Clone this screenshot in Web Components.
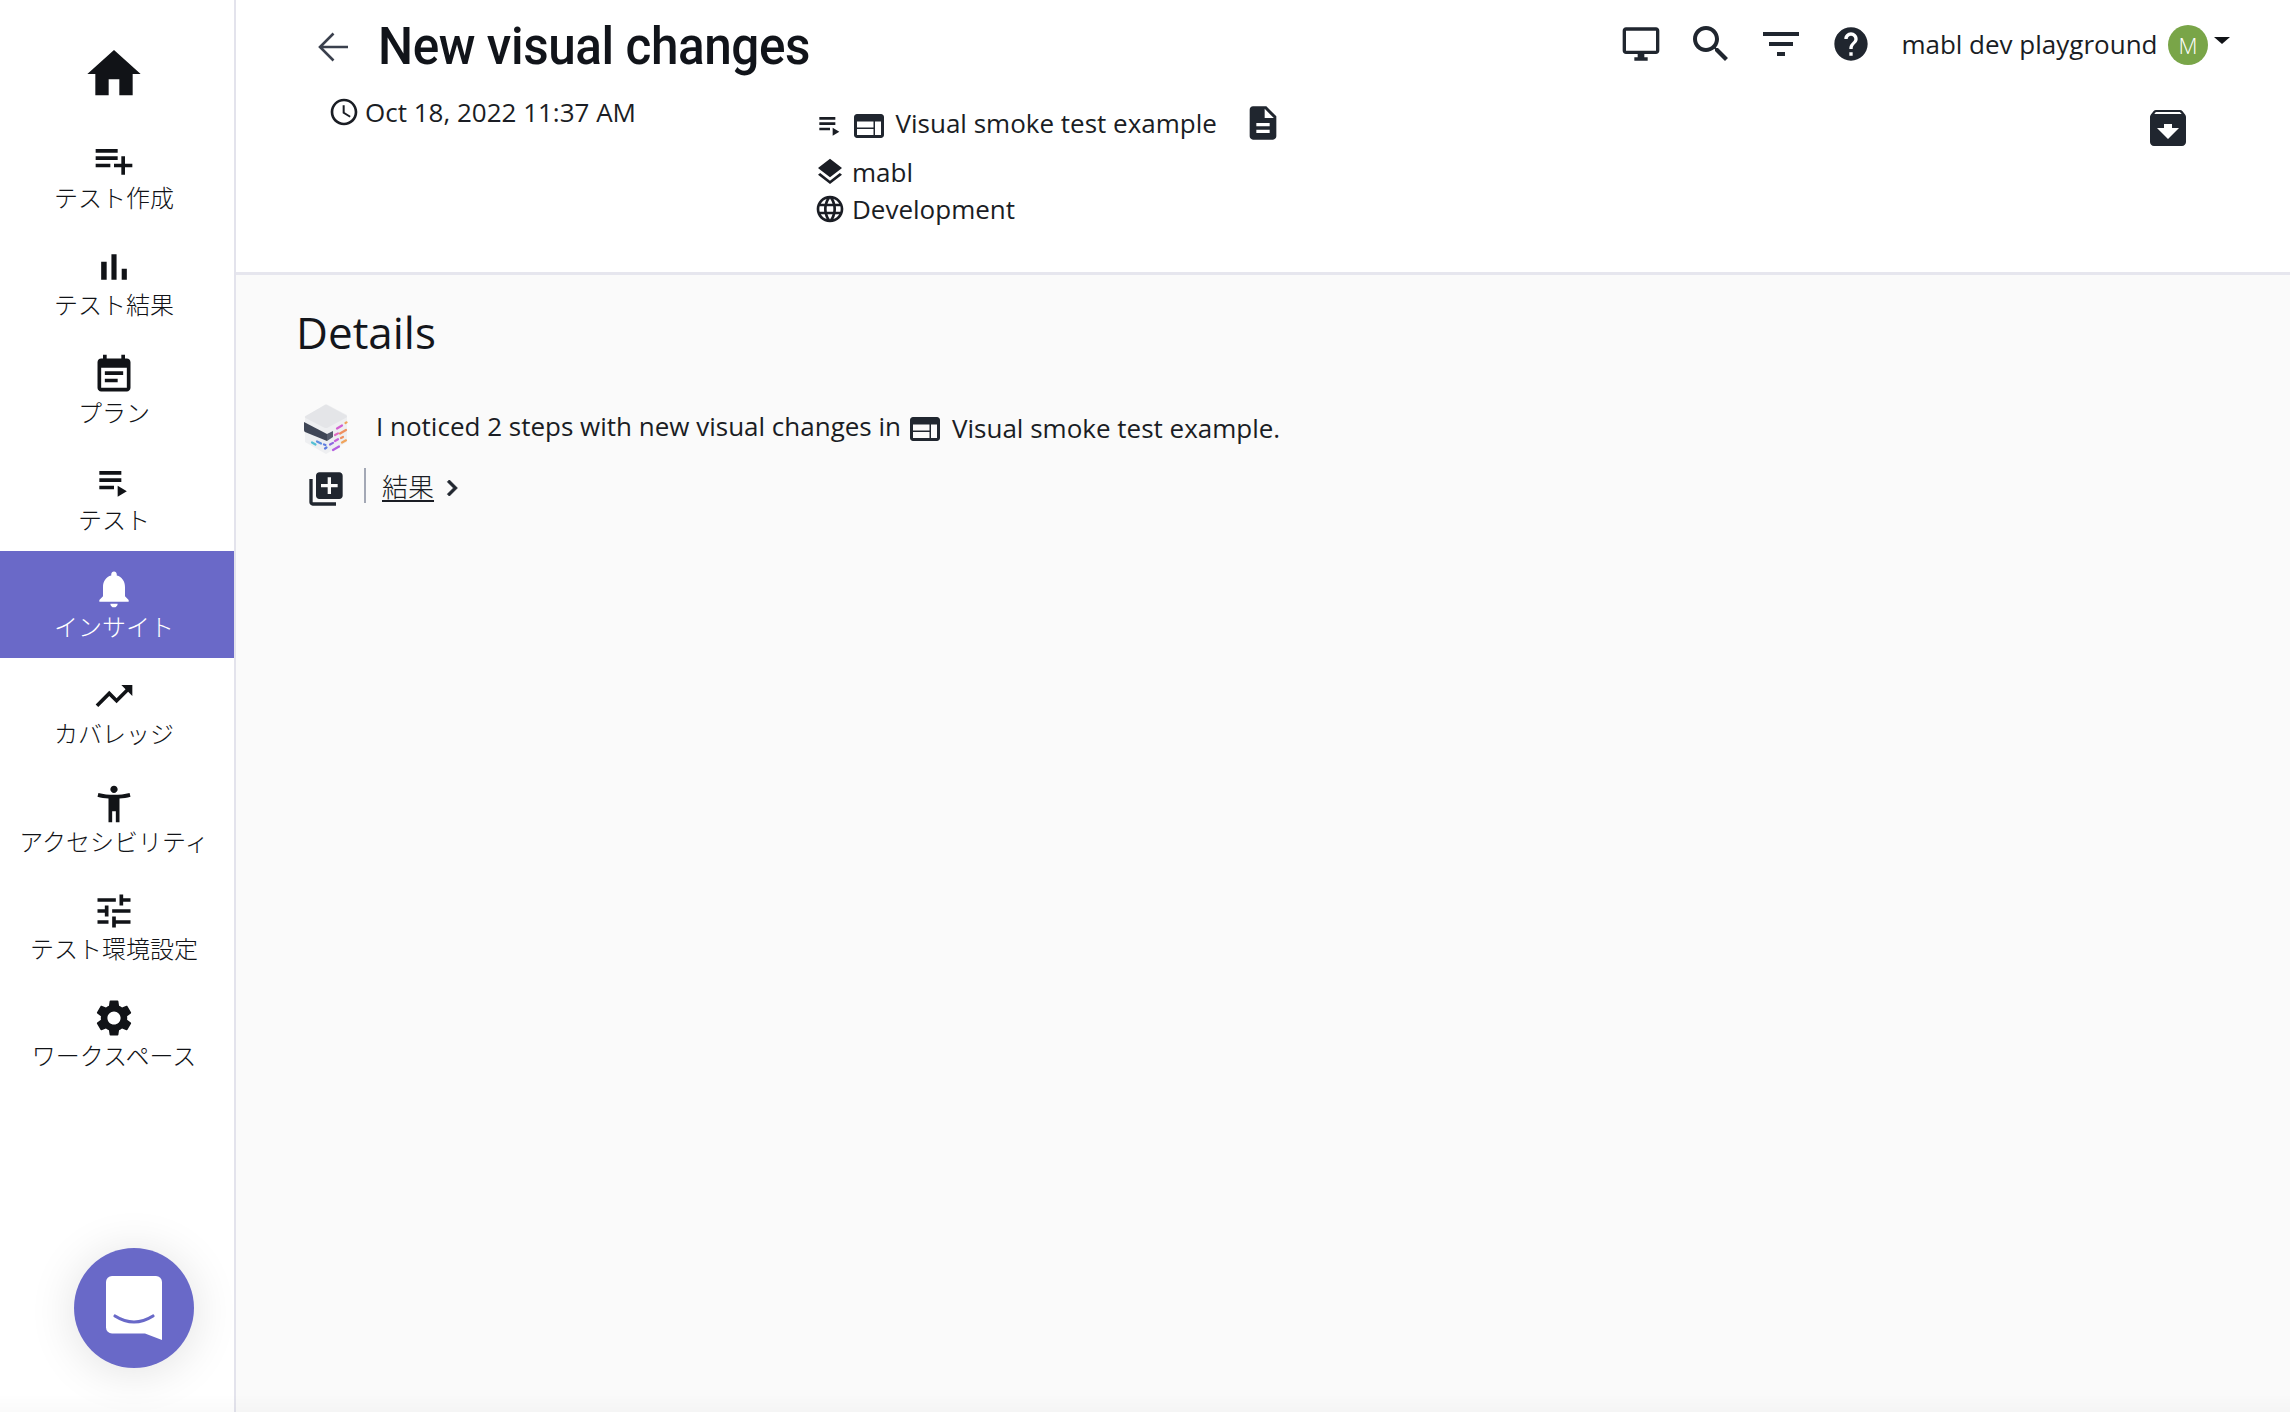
<!DOCTYPE html>
<html lang="ja">
<head>
<meta charset="utf-8">
<title>New visual changes</title>
<style>
  html, body { margin: 0; height: 100%; overflow: hidden; }
  body { font-family: "Open Sans", "Noto Sans CJK JP", sans-serif; color: #1a1d24; background: #fafafa; }
</style>
</head>
<body>
<mabl-app>
  <side-nav slot="nav">
    <nav-item icon="playlist_add">テスト作成</nav-item>
    <nav-item icon="bar_chart">テスト結果</nav-item>
    <nav-item icon="event_note">プラン</nav-item>
    <nav-item icon="playlist_play">テスト</nav-item>
    <nav-item icon="notifications" active>インサイト</nav-item>
    <nav-item icon="trending_up">カバレッジ</nav-item>
    <nav-item icon="accessibility">アクセシビリティ</nav-item>
    <nav-item icon="tune">テスト環境設定</nav-item>
    <nav-item icon="settings">ワークスペース</nav-item>
  </side-nav>
  <page-header slot="header" title-text="New visual changes"></page-header>
  <insight-details></insight-details>
  <chat-launcher slot="overlay"></chat-launcher>
</mabl-app>

<script>
const ICONS = {
  home: "M10 20v-6h4v6h5v-8h3L12 3 2 12h3v8z",
  playlist_add: "M14 10H2v2h12v-2zm0-4H2v2h12V6zm4 8v-4h-2v4h-4v2h4v4h2v-4h4v-2h-4zM2 16h8v-2H2v2z",
  bar_chart: "M5 9.2h3V19H5zM10.6 5h2.8v14h-2.8zm5.6 8H19v6h-2.8z",
  event_note: "M17 10H7v2h10v-2zm2-7h-1V1h-2v2H8V1H6v2H5c-1.11 0-1.99.9-1.99 2L3 19c0 1.1.89 2 2 2h14c1.1 0 2-.9 2-2V5c0-1.1-.9-2-2-2zm0 16H5V8h14v11zm-5-5H7v2h7v-2z",
  playlist_play: "M4 10h12v2H4zm0-4h12v2H4zm0 8h8v2H4zm10 0v6l5-3z",
  notifications: "M12 22c1.1 0 2-.9 2-2h-4c0 1.1.89 2 2 2zm6-6v-5c0-3.07-1.64-5.64-4.5-6.32V4c0-.83-.67-1.5-1.5-1.5s-1.5.67-1.5 1.5v.68C7.63 5.36 6 7.92 6 11v5l-2 2v1h16v-1l-2-2z",
  trending_up: "M16 6l2.29 2.29-4.88 4.88-4-4L2 16.59 3.41 18l6-6 4 4 6.3-6.29L22 12V6z",
  accessibility: "M20.5 6c-2.61.7-5.67 1-8.5 1s-5.89-.3-8.5-1L3 8c1.86.5 4 .83 6 1v13h2v-6h2v6h2V9c2-.17 4.14-.5 6-1l-.5-2zM12 6c1.1 0 2-.9 2-2s-.9-2-2-2-2 .9-2 2 .9 2 2 2z",
  tune: "M3 17v2h6v-2H3zM3 5v2h10V5H3zm10 16v-2h8v-2h-8v-2h-2v6h2zM7 9v2H3v2h4v2h2V9H7zm14 4v-2H11v2h10zm-6-4h2V7h4V5h-4V3h-2v6z",
  settings: "M19.14 12.94c.04-.3.06-.61.06-.94 0-.32-.02-.64-.07-.94l2.03-1.58c.18-.14.23-.41.12-.61l-1.92-3.32c-.12-.22-.37-.29-.59-.22l-2.39.96c-.5-.38-1.03-.7-1.62-.94l-.36-2.54c-.04-.24-.24-.41-.48-.41h-3.84c-.24 0-.43.17-.47.41l-.36 2.54c-.59.24-1.13.57-1.62.94l-2.39-.96c-.22-.08-.47 0-.59.22L2.74 8.87c-.12.21-.08.47.12.61l2.03 1.58c-.05.3-.09.63-.09.94s.02.64.07.94l-2.03 1.58c-.18.14-.23.41-.12.61l1.92 3.32c.12.22.37.29.59.22l2.39-.96c.5.38 1.03.7 1.62.94l.36 2.54c.05.24.24.41.48.41h3.84c.24 0 .44-.17.47-.41l.36-2.54c.59-.24 1.13-.56 1.62-.94l2.39.96c.22.08.47 0 .59-.22l1.92-3.32c.12-.22.07-.47-.12-.61l-2.01-1.58zM12 15.6c-1.98 0-3.6-1.62-3.6-3.6s1.62-3.6 3.6-3.6 3.6 1.62 3.6 3.6-1.62 3.6-3.6 3.6z",
  access_time: "M11.99 2C6.47 2 2 6.48 2 12s4.47 10 9.99 10C17.52 22 22 17.52 22 12S17.52 2 11.99 2zM12 20c-4.42 0-8-3.58-8-8s3.58-8 8-8 8 3.58 8 8-3.58 8-8 8zm.5-13H11v6l5.25 3.15.75-1.23-4.5-2.67z",
  web: "M20 4H4c-1.1 0-1.99.9-1.99 2L2 18c0 1.1.9 2 2 2h16c1.1 0 2-.9 2-2V6c0-1.1-.9-2-2-2zm-5 14H4v-4h11v4zm0-5H4V9h11v4zm5 5h-4V9h4v9z",
  description: "M14 2H6c-1.1 0-1.99.9-1.99 2L4 20c0 1.1.89 2 1.99 2H18c1.1 0 2-.9 2-2V8l-6-6zm2 16H8v-2h8v2zm0-4H8v-2h8v2zm-3-5V3.5L18.5 9H13z",
  layers: "M11.99 18.54l-7.37-5.73L3 14.07l9 7 9-7-1.63-1.27-7.38 5.74zM12 16l7.36-5.73L21 9l-9-7-9 7 1.63 1.27L12 16z",
  language: "M11.99 2C6.47 2 2 6.48 2 12s4.47 10 9.99 10C17.52 22 22 17.52 22 12S17.52 2 11.99 2zm6.93 6h-2.95c-.32-1.25-.78-2.45-1.38-3.56 1.84.63 3.37 1.91 4.33 3.56zM12 4.04c.83 1.2 1.48 2.53 1.91 3.96h-3.82c.43-1.43 1.08-2.76 1.91-3.96zM4.26 14C4.1 13.36 4 12.69 4 12s.1-1.36.26-2h3.38c-.08.66-.14 1.32-.14 2 0 .68.06 1.34.14 2H4.26zm.82 2h2.95c.32 1.25.78 2.45 1.38 3.56-1.84-.63-3.37-1.9-4.33-3.56zm2.95-8H5.08c.96-1.66 2.49-2.93 4.33-3.56C8.81 5.55 8.35 6.75 8.03 8zM12 19.96c-.83-1.2-1.48-2.53-1.91-3.96h3.82c-.43 1.43-1.08 2.76-1.91 3.96zM14.34 14H9.66c-.09-.66-.16-1.32-.16-2 0-.68.07-1.35.16-2h4.68c.09.65.16 1.32.16 2 0 .68-.07 1.34-.16 2zm.25 5.56c.6-1.11 1.06-2.31 1.38-3.56h2.95c-.96 1.65-2.49 2.93-4.33 3.56zM16.36 14c.08-.66.14-1.32.14-2 0-.68-.06-1.34-.14-2h3.38c.16.64.26 1.31.26 2s-.1 1.36-.26 2h-3.38z",
  desktop: "M21 2H3c-1.1 0-2 .9-2 2v12c0 1.1.9 2 2 2h7v2H8v2h8v-2h-2v-2h7c1.1 0 2-.9 2-2V4c0-1.1-.9-2-2-2zm0 14H3V4h18v12z",
  search: "M15.5 14h-.79l-.28-.27C15.41 12.59 16 11.11 16 9.5 16 5.91 13.09 3 9.5 3S3 5.91 3 9.5 5.91 16 9.5 16c1.61 0 3.09-.59 4.23-1.57l.27.28v.79l5 4.99L20.49 19l-4.99-5zm-6 0C7.01 14 5 11.99 5 9.5S7.01 5 9.5 5 14 7.01 14 9.5 11.99 14 9.5 14z",
  filter: "M10 18h4v-2h-4v2zM3 6v2h18V6H3zm3 7h12v-2H6v2z",
  help: "M12 2C6.48 2 2 6.48 2 12s4.48 10 10 10 10-4.48 10-10S17.52 2 12 2zm1 17h-2v-2h2v2zm2.07-7.75l-.9.92C13.45 12.9 13 13.5 13 15h-2v-.5c0-1.1.45-2.1 1.17-2.83l1.24-1.26c.37-.36.59-.86.59-1.41 0-1.1-.9-2-2-2s-2 .9-2 2H8c0-2.21 1.79-4 4-4s4 1.79 4 4c0 .88-.36 1.68-.93 2.25z",
  archive: "M20.54 5.23l-1.39-1.68C18.88 3.21 18.47 3 18 3H6c-.47 0-.88.21-1.16.55L3.46 5.23C3.17 5.57 3 6.02 3 6.5V19c0 1.1.9 2 2 2h14c1.1 0 2-.9 2-2V6.5c0-.48-.17-.93-.46-1.27zM12 17.5L6.5 12H10v-2h4v2h3.5L12 17.5zM5.12 5l.81-1h12l.94 1H5.12z",
  library_add: "M4 6H2v14c0 1.1.9 2 2 2h14v-2H4V6zm16-4H8c-1.1 0-2 .9-2 2v12c0 1.1.9 2 2 2h12c1.1 0 2-.9 2-2V4c0-1.1-.9-2-2-2zm-1 9h-4v4h-2v-4H9V9h4V5h2v4h4v2z",
  chevron: "M10 6L8.59 7.41 13.17 12l-4.58 4.59L10 18l6-6z"
};

class UiIcon extends HTMLElement {
  constructor() {
    super();
    this.attachShadow({ mode: "open" });
  }

  connectedCallback() {
    const size = this.getAttribute("size") || 24;
    const path = ICONS[this.getAttribute("name")] || "";
    this.shadowRoot.innerHTML = `
      <style>
        :host { display: block; flex: none; width: ${size}px; height: ${size}px; color: inherit; }
        svg { display: block; width: 100%; height: 100%; fill: currentColor; }
      </style>
      <svg viewBox="0 0 24 24" aria-hidden="true"><path d="${path}"/></svg>`;
  }
}
customElements.define("ui-icon", UiIcon);

class MablApp extends HTMLElement {
  constructor() {
    super();
    this.attachShadow({ mode: "open" });
    this.shadowRoot.innerHTML = `
      <style>
        :host { display: flex; position: relative; width: 100%; height: 100vh; background: #fafafa; }
        :host::after {
          content: ""; position: absolute; left: 0; right: 0; bottom: 0; height: 18px; pointer-events: none;
          background: linear-gradient(to bottom, rgba(0, 0, 0, 0), rgba(0, 0, 0, .02));
        }
        .main { flex: 1; min-width: 0; display: flex; flex-direction: column; }
      </style>
      <slot name="nav"></slot>
      <div class="main">
        <slot name="header"></slot>
        <slot></slot>
      </div>
      <slot name="overlay"></slot>`;
  }
}
customElements.define("mabl-app", MablApp);

class SideNav extends HTMLElement {
  constructor() {
    super();
    this.attachShadow({ mode: "open" });
    this.shadowRoot.innerHTML = `
      <style>
        :host {
          display: block; flex: none; box-sizing: border-box; width: 236px; height: 100%;
          background: #fff; border-right: 2px solid #e3e3ec;
        }
        .home {
          height: 122px; display: flex; justify-content: center; padding: 42px 6px 0 0;
          box-sizing: border-box; color: #111317;
        }
      </style>
      <div class="home"><ui-icon name="home" size="64"></ui-icon></div>
      <slot></slot>`;
  }
}
customElements.define("side-nav", SideNav);

class NavItem extends HTMLElement {
  constructor() {
    super();
    this.attachShadow({ mode: "open" });
  }

  connectedCallback() {
    this.shadowRoot.innerHTML = `
      <style>
        :host {
          display: flex; flex-direction: column; align-items: center; box-sizing: border-box;
          height: 107.3px; padding: 16px 6px 0 0; color: #111317;
        }
        :host([active]) { background: #6a69c8; color: #fff; }
        .label {
          font-family: "Noto Sans CJK JP", sans-serif; font-size: 24px; line-height: 29px;
          font-weight: 300; white-space: nowrap;
        }
      </style>
      <ui-icon name="${this.getAttribute("icon")}" size="44"></ui-icon>
      <div class="label"><slot></slot></div>`;
  }
}
customElements.define("nav-item", NavItem);

class PageHeader extends HTMLElement {
  constructor() {
    super();
    this.attachShadow({ mode: "open" });
  }

  static get styles() {
    return `
      :host {
        display: block; flex: none; box-sizing: border-box; height: 275px;
        padding: 0 60px 0 78px; background: #fff; border-bottom: 3px solid #e6e6ee;
        font-size: 26px;
      }
      .top { display: flex; align-items: center; height: 88px; margin-bottom: 8px; }
      .back { flex: none; width: 40px; height: 40px; margin: 6px 24px 0 0; }
      .back path { fill: none; stroke: #3a404d; stroke-width: 2.6; }
      h1 {
        margin: 6px 0 0; font-family: "Roboto", sans-serif; letter-spacing: -.45px;
        font-size: 51px; font-weight: 500; line-height: 60px; color: #11141a; white-space: nowrap;
        transform: scaleX(.97); transform-origin: left center;
      }
      .tools { margin-left: auto; display: flex; align-items: center; color: #20262f; }
      .cell { width: 70px; display: flex; justify-content: center; }
      .account { margin-left: 15.5px; color: #1a1d24; white-space: nowrap; }
      .avatar {
        width: 40px; height: 40px; margin: 2px 6px 0 10.5px; border-radius: 50%; background: #79a548; color: #fff;
        display: flex; align-items: center; justify-content: center; font-size: 22px; font-weight: 300;
      }
      .caret {
        align-self: flex-start; margin-top: 17px; width: 0; height: 0;
        border: 8px solid transparent; border-top: 7px solid #111317; border-bottom: 0;
      }
      .meta { display: flex; align-items: flex-start; }
      .date { width: 486px; margin-left: 14px; display: flex; align-items: center; height: 32px; gap: 5px; flex: none; }
      .info { display: flex; flex-direction: column; margin-left: 0; color: #1a1d24; }
      .line { display: flex; align-items: center; height: 36px; gap: 6px; }
      .line + .line + .line { margin-top: 1px; }
      .line.first { height: 48px; margin: 3px 0 7px; gap: 7px; }
      .line.first .web { color: #20262f; margin: 6px 1.5px 0 -1px; }
      .line.first .plist { margin-right: -1px; margin-top: 3px; }
      .line.first .doc { color: #20262f; margin-left: 19px; }
      .archive { margin: 8px 38px 0 auto; color: #20262f; }
    `;
  }

  connectedCallback() {
    this.shadowRoot.innerHTML = `
      <style>${PageHeader.styles}</style>
      <div class="top">
        <svg class="back" viewBox="0 0 40 40"><path d="M34 20H7.5M19.5 6.5 6 20l13.5 13.5"/></svg>
        <h1>${this.getAttribute("title-text")}</h1>
        <div class="tools">
          <div class="cell"><ui-icon name="desktop" size="40"></ui-icon></div>
          <div class="cell"><ui-icon name="search" size="48"></ui-icon></div>
          <div class="cell"><ui-icon name="filter" size="48"></ui-icon></div>
          <div class="cell"><ui-icon name="help" size="40"></ui-icon></div>
          <span class="account">mabl dev playground</span>
          <span class="avatar">M</span>
          <span class="caret"></span>
        </div>
      </div>
      <div class="meta">
        <div class="date"><ui-icon name="access_time" size="32"></ui-icon><span>Oct 18, 2022 11:37 AM</span></div>
        <div class="info">
          <div class="line first">
            <ui-icon class="plist" name="playlist_play" size="32"></ui-icon>
            <ui-icon class="web" name="web" size="36"></ui-icon>
            <span>Visual smoke test example</span>
            <ui-icon class="doc" name="description" size="40"></ui-icon>
          </div>
          <div class="line"><ui-icon name="layers" size="32"></ui-icon><span>mabl</span></div>
          <div class="line"><ui-icon name="language" size="32"></ui-icon><span>Development</span></div>
        </div>
        <ui-icon class="archive" name="archive" size="48"></ui-icon>
      </div>`;
  }
}
customElements.define("page-header", PageHeader);

class InsightCube extends HTMLElement {
  constructor() {
    super();
    this.attachShadow({ mode: "open" });
    this.shadowRoot.innerHTML = `
      <style>
        :host { display: block; flex: none; width: 44px; height: 50px; }
        svg { display: block; width: 100%; height: 100%; }
      </style>
      <svg viewBox="0 0 44 50">
        <path d="M22 0 43 11 v27 L22 50 1 38 V13z" fill="#eeeff1"/>
        <path d="M20.5 1.2Q22 .4 23.5 1.2L42 11.2Q44 12.5 42 13.8L24 23.5Q22 24.5 20 23.5L1.5 14Q0 13 1.5 12z" fill="#e4e5e8"/>
        <path d="M0 18 23 30V37L1 28q-1-.5-1-2z" fill="#3f4656"/>
        <path d="M23 30l6-3v6l-6 4z" fill="#565d6d"/>
        <g stroke-width="2.2" stroke-linecap="round" fill="none">
          <path d="M33 24.500l5-3" stroke="#d25fd0"/><path d="M41.500 19l1-.6" stroke="#f0a45c"/>
          <path d="M36 29.500l6-3.500" stroke="#ef8f5f"/><path d="M31 31l3-1.600" stroke="#e26ac0"/>
          <path d="M37 34l2-1" stroke="#ef8f5f"/><path d="M31 37l3-1.800" stroke="#c662dc"/>
          <path d="M38 38.500l4-2.200" stroke="#f0a45c"/><path d="M26 40.500l3-1.600" stroke="#8f67e0"/>
          <path d="M29 46l6-3.500" stroke="#b45fe0"/><path d="M13 37.500l4 2" stroke="#5f8fe0"/>
          <path d="M8 38.500l3.500 2" stroke="#54c0d4"/><path d="M21 44.500l1.500-1" stroke="#5f7de0"/>
          <path d="M20 40.500l1.500.5" stroke="#5f7de0"/>
        </g>
      </svg>`;
  }
}
customElements.define("insight-cube", InsightCube);

class InsightDetails extends HTMLElement {
  constructor() {
    super();
    this.attachShadow({ mode: "open" });
    this.shadowRoot.innerHTML = `
      <style>
        :host { display: block; flex: 1; background: #fafafa; padding: 27px 0 0 60px; font-size: 26px; color: #1a1d24; }
        h2 { margin: 0 0 42px; font-size: 44px; font-weight: 400; line-height: 60px; color: #14161b; }
        .message { display: flex; align-items: flex-start; height: 64px; margin-left: 8px; white-space: nowrap; }
        .message insight-cube { margin-right: 28px; }
        .text { line-height: 36px; margin-top: 4px; }
        .web { color: #20262f; margin: 7px 9px 0 6px; }
        .text.after { margin-top: 6px; }
        .result { display: flex; align-items: flex-start; margin-left: 10px; }
        .add { color: #20262f; margin-top: 1px; }
        .sep { width: 2px; height: 35px; background: #a3a8b5; margin: 0 16px 0 18px; }
        a {
          font-family: "Noto Sans CJK JP", sans-serif; font-size: 26px; font-weight: 300; line-height: 36px; color: #1a1d24;
          text-decoration: underline; text-underline-offset: 3px; margin-top: 0;
        }
        .chev { color: #20262f; stroke: #20262f; stroke-width: .7; margin: 4px 0 0 2px; }
      </style>
      <h2>Details</h2>
      <div class="message">
        <insight-cube></insight-cube>
        <span class="text">I noticed 2 steps with new visual changes in</span>
        <ui-icon class="web" name="web" size="36"></ui-icon>
        <span class="text after">Visual smoke test example.</span>
      </div>
      <div class="result">
        <ui-icon class="add" name="library_add" size="40"></ui-icon>
        <span class="sep"></span>
        <a>結果</a>
        <ui-icon class="chev" name="chevron" size="32"></ui-icon>
      </div>`;
  }
}
customElements.define("insight-details", InsightDetails);

class ChatLauncher extends HTMLElement {
  constructor() {
    super();
    this.attachShadow({ mode: "open" });
    this.shadowRoot.innerHTML = `
      <style>
        :host {
          position: fixed; left: 74px; bottom: 44px; width: 120px; height: 120px; border-radius: 50%;
          background: #6969c8; box-shadow: 0 4px 48px rgba(0, 0, 0, .12);
          display: flex; align-items: center; justify-content: center;
        }
        svg { display: block; width: 56px; height: 64px; }
      </style>
      <svg viewBox="0 0 56 64">
        <path d="M6 0h44a6 6 0 0 1 6 6v58L39 57.500H6a6 6 0 0 1-6-6V6a6 6 0 0 1 6-6z" fill="#fff"/>
        <path d="M9 40Q28 52 47 40" fill="none" stroke="#6969c8" stroke-width="3.200" stroke-linecap="round"/>
      </svg>`;
  }
}
customElements.define("chat-launcher", ChatLauncher);
</script>
</body>
</html>
